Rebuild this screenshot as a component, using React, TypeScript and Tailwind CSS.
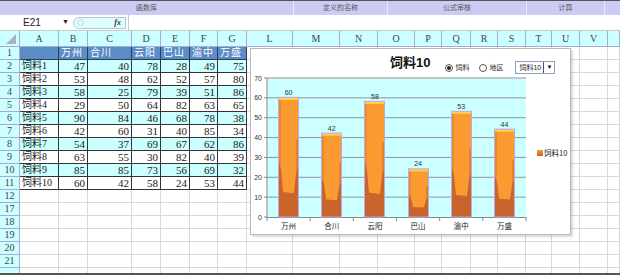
import React from 'react';

const GRID =
  'grid grid-cols-[20px_39px_29px_44px_29px_29px_28px_29px_46px_47px_38px_37px_27px_29px_27px_28px_26px_28px_28px_12px]';

const colLetters = ['', 'A', 'B', 'C', 'D', 'E', 'F', 'G', 'L', 'M', 'N', 'O', 'P', 'Q', 'R', 'S', 'T', 'U', 'V', ''];

const regions = ['万州', '合川', '云阳', '巴山', '渝中', '万盛'];

const feed: [string, number[]][] = [
  ['饲料1', [47, 40, 78, 28, 49, 75]],
  ['饲料2', [53, 48, 62, 52, 57, 80]],
  ['饲料3', [58, 25, 79, 39, 51, 86]],
  ['饲料4', [29, 50, 64, 82, 63, 65]],
  ['饲料5', [90, 84, 46, 68, 78, 38]],
  ['饲料6', [42, 60, 31, 40, 85, 34]],
  ['饲料7', [54, 37, 69, 67, 62, 86]],
  ['饲料8', [63, 55, 30, 82, 40, 39]],
  ['饲料9', [85, 85, 73, 56, 69, 32]],
  ['饲料10', [60, 42, 58, 24, 53, 44]],
];

// last one is the half-visible row at the bottom edge, left without a number
const emptyRows = ['12', '17', '18', '19', '20', '21', ''];

const RowHead = ({ n }: { n: string }) => (
  <div className="h-[13px] bg-[#ccffff] border-r border-b border-[#a9a9d9] text-[10px] leading-[12px] text-center text-[#444]">
    {n}
  </div>
);

const EmptyCells = ({ from }: { from: number }) => (
  <>
    {colLetters.slice(from).map((_, i) => (
      <div key={i} className="h-[13px] border-r border-b border-[#d9d9d9]" />
    ))}
  </>
);

const Ribbon = () => (
  <div className="h-[15px] flex border-t border-[#555] bg-[#cbcbf4] text-[7px] leading-[13px] text-[#555] font-[family-name:'Noto_Sans_CJK_SC',sans-serif]">
    <div className="w-[294px] text-center border-r border-[#e9e9ff]">函数库</div>
    <div className="w-[94px] text-center border-r border-[#e9e9ff]">定义的名称</div>
    <div className="w-[139px] text-center border-r border-[#e9e9ff]">公式审核</div>
    <div className="w-[78px] text-center border-r border-[#e9e9ff]">计算</div>
    <div className="flex-1" />
  </div>
);

const FormulaBar = () => (
  <div className="h-[16px] flex items-center bg-white border-b border-[#c9c9c9]">
    <div className="w-[73px] h-full flex items-center justify-between pl-[23px] pr-[4px] text-[10px] text-[#222] font-[family-name:'Liberation_Sans',sans-serif]">
      <span>E21</span>
      <span className="text-[7px]">▼</span>
    </div>
    <div className="w-[53px] h-[12px] flex items-center justify-between rounded-l-full bg-[#ddffff] border border-[#b5c5cc] pl-[3px] pr-[4px]">
      <span className="w-[7px] h-[7px] rounded-full border border-[#c8d6dc]" />
      <span className="text-[8px] italic font-bold text-[#333] font-[family-name:'Liberation_Serif',serif]">fx</span>
    </div>
    <div className="flex-1 h-full border-l border-[#c9c9c9] ml-[2px]" />
  </div>
);

const Sheet = () => (
  <div className="font-[family-name:'Liberation_Serif','Noto_Sans_CJK_SC',serif]">
    <div className={GRID}>
      {colLetters.map((c, i) => (
        <div
          key={i}
          className="h-[16px] bg-[#ccffff] border-r border-b border-[#a9a9d9] text-[10px] leading-[15px] text-center text-[#444]"
        >
          {i === 0 ? (
            <svg width="19" height="15" className="block">
              <polygon points="16,3 16,13 6,13" fill="#a9b3bd" />
            </svg>
          ) : (
            c
          )}
        </div>
      ))}
    </div>

    <div className={GRID}>
      <RowHead n="1" />
      <div className="h-[13px] bg-[#5b8cc6] border-r border-b border-[#2f3d52]" />
      {regions.map((r) => (
        <div
          key={r}
          className="h-[13px] bg-[#5b8cc6] border-r border-b border-[#2f3d52] text-[10px] leading-[12px] pl-[2px] text-white tracking-[1px] whitespace-nowrap"
        >
          {r}
        </div>
      ))}
      <EmptyCells from={8} />
    </div>

    {feed.map(([name, vals], r) => {
      const bg = r % 2 === 0 ? 'bg-[#ccffff]' : 'bg-white';
      return (
        <div key={name} className={GRID}>
          <RowHead n={String(r + 2)} />
          <div className={`h-[13px] ${bg} border-r border-b border-[#333] text-[10px] leading-[12px] pl-[2px] text-[#1a1a1a] whitespace-nowrap`}>
            {name}
          </div>
          {vals.map((v, i) => (
            <div
              key={i}
              className={`h-[13px] ${bg} border-r border-b border-[#333] text-[11px] leading-[12px] pr-[2px] text-right text-[#1a1a1a]`}
            >
              {v}
            </div>
          ))}
          <EmptyCells from={8} />
        </div>
      );
    })}

    {emptyRows.map((n, i) => (
      <div key={i} className={GRID}>
        <RowHead n={n} />
        <EmptyCells from={1} />
      </div>
    ))}
  </div>
);

const chartVals = [60, 42, 58, 24, 53, 44];

const Plot = () => {
  const x0 = 16;
  const w = 259;
  const top = 5;
  const bottom = 144;
  const k = (bottom - top) / 70;
  const cw = w / 6;
  const bw = 19;
  return (
    <svg width="319" height="161" className="block overflow-visible">
      <defs>
        <linearGradient id="lg" x1="0" y1="0" x2="0" y2="1">
          <stop offset="0" stopColor="#fa9b31" />
          <stop offset="1" stopColor="#c7632b" />
        </linearGradient>
      </defs>
      <rect x={x0} y={top} width={w} height={bottom - top} fill="#ccffff" />
      {[0, 1, 2, 3, 4, 5, 6, 7].map((i) => {
        const y = bottom - i * 10 * k;
        return (
          <g key={i}>
            {i > 0 && <line x1={x0} x2={x0 + w} y1={y} y2={y} stroke="#959595" strokeWidth="1" />}
            <line x1={x0 - 3} x2={x0} y1={y} y2={y} stroke="#888" strokeWidth="1" />
            <text x={x0 - 5} y={y + 2.5} fontSize="7" textAnchor="end" fill="#333" fontFamily="Liberation Sans, sans-serif">
              {i * 10}
            </text>
          </g>
        );
      })}
      <line x1={x0} x2={x0} y1={top} y2={bottom} stroke="#888" strokeWidth="1" />
      <line x1={x0} x2={x0 + w} y1={bottom + 0.5} y2={bottom + 0.5} stroke="#888" strokeWidth="1" />
      {[0, 1, 2, 3, 4, 5, 6].map((i) => (
        <line key={i} x1={x0 + i * cw} x2={x0 + i * cw} y1={bottom} y2={bottom + 4} stroke="#888" strokeWidth="1" />
      ))}
      {chartVals.map((v, i) => {
        const cx = x0 + cw * (i + 0.5);
        const x = Math.round(cx - bw / 2);
        const h = v * k;
        const y = bottom - h;
        const dark = `${x},${bottom} ${x},${bottom - 0.46 * h} ${x + 2},${bottom - 0.4 * h} ${x + 4},${bottom - 0.21 * h} ${x + bw - 4},${bottom - 0.2 * h} ${x + bw - 2},${bottom - 0.36 * h} ${x + bw},${bottom - 0.42 * h} ${x + bw},${bottom}`;
        return (
          <g key={i}>
            <rect x={x} y={y} width={bw} height={h} fill="#fa9a30" />
            <rect x={x} y={y} width={2} height={h} fill="#ec8a2c" />
            <rect x={x + bw - 2} y={y + h * 0.35} width={2} height={h * 0.65} fill="#e5812b" />
            <polygon points={dark} fill="#c8642c" />
            <rect x={x} y={y} width={bw} height={2} fill="#ffd44a" />
            <rect x={x - 0.5} y={y - 0.5} width={bw + 1} height={h + 0.5} fill="none" stroke="#bba8e6" strokeWidth="1" />
            <text x={cx} y={y - 3} fontSize="7" textAnchor="middle" fill="#333" fontFamily="Liberation Sans, sans-serif">
              {v}
            </text>
            <text x={cx} y={bottom + 12} fontSize="7.5" textAnchor="middle" fill="#222" fontFamily="Noto Sans CJK SC, sans-serif">
              {regions[i]}
            </text>
          </g>
        );
      })}
      <rect x="286" y="77" width="6" height="6" fill="url(#lg)" />
      <text x="293" y="83" fontSize="7.5" fill="#222" fontFamily="Noto Sans CJK SC, sans-serif">
        饲料10
      </text>
    </svg>
  );
};

const Radio = ({ label, checked }: { label: string; checked?: boolean }) => (
  <div className="flex items-center gap-[2px]">
    <span className="w-[8px] h-[8px] rounded-full border border-[#555] bg-white flex items-center justify-center">
      {checked && <span className="w-[4px] h-[4px] rounded-full bg-[#222]" />}
    </span>
    <span className="text-[7px] leading-[10px] text-[#222]">{label}</span>
  </div>
);

const Chart = () => (
  <div className="absolute left-[250px] top-[48px] w-[321px] h-[187px] bg-white border border-[#b9b9b9] shadow-[2px_2px_2px_rgba(0,0,0,0.15)] font-[family-name:'Liberation_Sans','Noto_Sans_CJK_SC',sans-serif]">
    <div className="h-[24px] flex items-start">
      <div className="ml-[139px] pt-[5px] text-[13px] leading-[17px] font-bold text-[#111]">饲料10</div>
      <div className="ml-[15px] mt-[14px] flex items-center gap-[10px]">
        <Radio label="饲料" checked />
        <Radio label="地区" />
      </div>
      <div className="ml-[12px] mt-[12px] w-[40px] h-[13px] flex items-center justify-between border border-[#8aa0c0] bg-white pl-[3px]">
        <span className="text-[7px] leading-[10px] text-[#222]">饲料10</span>
        <span className="w-[11px] h-full border-l border-[#3b5a8a] flex items-center justify-center text-[6px] text-[#111]">▼</span>
      </div>
    </div>
    <Plot />
  </div>
);

export default function App() {
  return (
    <div className="relative w-[620px] h-[275px] overflow-hidden bg-white border-b-2 border-[#555]">
      <Ribbon />
      <FormulaBar />
      <Sheet />
      <Chart />
    </div>
  );
}
